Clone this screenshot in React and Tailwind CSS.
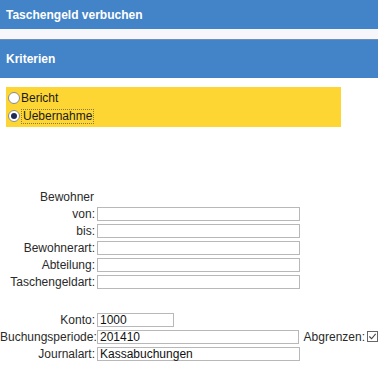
import React from "react";

const font = { fontFamily: '"Liberation Sans", Arial, sans-serif' };

function Radio({ checked }) {
  return (
    <span className="inline-flex h-[12px] w-[12px] items-center justify-center rounded-full border border-[#8a8a8a] bg-white">
      {checked && <span className="h-[6px] w-[6px] rounded-full bg-[#1c2a55]" />}
    </span>
  );
}

function Row({ label, value, w = "w-[203px]", extra }) {
  return (
    <div className="flex h-[17px] items-center">
      <div className="w-[96px] pr-[1px] text-right text-[12px] text-[#2a2a2a]">{label}</div>
      <div className={`ml-[1px] flex h-[14px] ${w} items-center border border-[#b8b8b8] bg-white pl-[2px] text-[12px] text-[#111]`}>
        {value}
      </div>
      {extra}
    </div>
  );
}

export default function App() {
  return (
    <div className="h-[365px] w-[378px] overflow-hidden bg-white" style={font}>
      <div className="flex h-[29px] items-center bg-[#4383c7] pl-[6px] text-[12px] font-bold text-white">
        Taschengeld verbuchen
      </div>
      <div className="h-[11px] border-b border-[#6f8fb5] bg-[#f6f6fb]" />
      <div className="flex h-[38px] items-center bg-[#4383c7] pl-[6px] text-[12px] font-bold text-white">
        Kriterien
      </div>
      <div className="mt-[9px] ml-[6px] flex h-[40px] w-[335px] flex-col justify-center bg-[#fdd634] text-[12px] text-[#1a1a1a]">
        <div className="flex h-[18px] items-center gap-[1px] pl-[2px]">
          <Radio />
          <span>Bericht</span>
        </div>
        <div className="flex h-[18px] items-center gap-[1px] pl-[2px]">
          <Radio checked />
          <span className="border border-dotted border-[#8a7a40] px-[1px] leading-[13px]">Uebernahme</span>
        </div>
      </div>
      <div className="mt-[61px] flex flex-col">
        <div className="flex h-[17px] items-center">
          <div className="w-[94px] text-right text-[12px] text-[#2a2a2a]">Bewohner</div>
        </div>
        <Row label="von:" />
        <Row label="bis:" />
        <Row label="Bewohnerart:" />
        <Row label="Abteilung:" />
        <Row label="Taschengeldart:" />
      </div>
      <div className="mt-[21px] flex flex-col">
        <Row label="Konto:" value="1000" w="w-[77px]" />
        <Row
          label="Buchungsperiode:"
          value="201410"
          extra={
            <div className="ml-[5px] flex items-center text-[12px] text-[#2a2a2a]">
              <span>Abgrenzen:</span>
              <span className="ml-[2px] flex h-[11px] w-[11px] items-center justify-center border border-[#666] bg-white">
                <svg viewBox="0 0 10 10" className="h-[9px] w-[9px]">
                  <path d="M1.5 5 L4 7.5 L8.5 2" fill="none" stroke="#444" strokeWidth="1.2" />
                </svg>
              </span>
            </div>
          }
        />
        <Row label="Journalart:" value="Kassabuchungen" />
      </div>
    </div>
  );
}
